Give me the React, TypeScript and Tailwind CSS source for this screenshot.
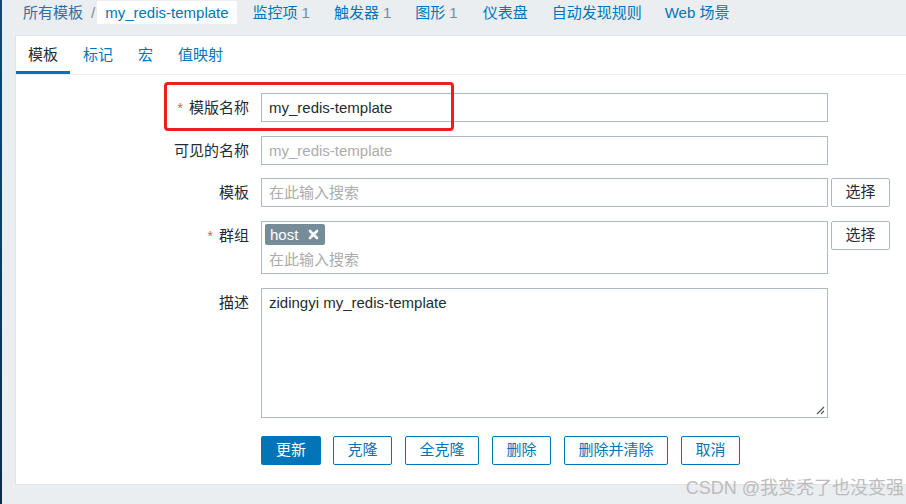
import React from "react";

const font = { fontFamily: '"Liberation Sans", Arial, "Noto Sans CJK SC", sans-serif' };

function Label({ text, required }: { text: string; required?: boolean }) {
  return (
    <div className="w-[233px] shrink-0 h-[29px] leading-[29px] text-right text-[15px] text-[#1f2c33]">
      {required && <span className="text-[#e45959] mr-[6px] text-[14px]">*</span>}
      {text}
    </div>
  );
}

export default function App() {
  return (
    <div className="w-[906px] h-[504px] bg-[#ebeef0] flex overflow-hidden relative" style={font}>
      <div className="w-[2px] h-full shrink-0 bg-gradient-to-b from-[#0b4b80] via-[#0c3d66] to-[#0e2b44]" />
      <div className="flex-1 flex flex-col min-w-0">
        {/* breadcrumb / nav */}
        <div className="h-[35px] shrink-0 flex items-start pt-[1px] pl-[21px] text-[15px] leading-[23px] whitespace-nowrap">
          <span className="text-[#2d6fab]">所有模板</span>
          <span className="text-[#768d99] ml-[8px] mr-[2px]">/</span>
          <span className="bg-white rounded-[2px] px-[8px] h-[23px] text-[#0275b8]">my_redis-template</span>
          <span className="ml-[16px] text-[#0275b8]">监控项<span className="text-[#768d99] ml-[4px]">1</span></span>
          <span className="ml-[24px] text-[#0275b8]">触发器<span className="text-[#768d99] ml-[4px]">1</span></span>
          <span className="ml-[24px] text-[#0275b8]">图形<span className="text-[#768d99] ml-[4px]">1</span></span>
          <span className="ml-[25px] text-[#0275b8]">仪表盘</span>
          <span className="ml-[24px] text-[#0275b8]">自动发现规则</span>
          <span className="ml-[23px] text-[#0275b8]">Web 场景</span>
        </div>
        {/* panel */}
        <div className="ml-[13px] h-[450px] bg-white border border-[#dfe4e7] border-r-0 flex flex-col">
          <div className="h-[39px] shrink-0 flex border-b border-[#ebeef0] text-[15px]">
            <div className="pl-[12px] pr-[12px] h-full flex items-center border-b-[3px] border-[#0275b8] text-[#1f2c33] pt-[3px]">模板</div>
            <div className="pl-[13px] pr-[12px] h-full flex items-center text-[#0275b8]">标记</div>
            <div className="pl-[13px] pr-[12px] h-full flex items-center text-[#0275b8]">宏</div>
            <div className="pl-[13px] pr-[12px] h-full flex items-center text-[#0275b8]">值映射</div>
          </div>
          <div className="flex flex-col pt-[18px] text-[15px]">
            <div className="flex">
              <Label text="模版名称" required />
              <div className="ml-[12px] w-[567px] h-[29px] border border-[#acbbc2] px-[7px] leading-[27px] text-[#1f2c33]">my_redis-template</div>
            </div>
            <div className="flex mt-[14px]">
              <Label text="可见的名称" />
              <div className="ml-[12px] w-[567px] h-[29px] border border-[#acbbc2] px-[7px] leading-[27px] text-[#acacac]">my_redis-template</div>
            </div>
            <div className="flex mt-[13px]">
              <Label text="模板" />
              <div className="ml-[12px] w-[567px] h-[29px] border border-[#acbbc2] px-[7px] leading-[27px] text-[#acacac]">在此输入搜索</div>
              <div className="ml-[3px] w-[59px] h-[29px] border border-[#acbbc2] rounded-[2px] flex items-center justify-center text-[#1f2c33]">选择</div>
            </div>
            <div className="flex mt-[14px]">
              <Label text="群组" required />
              <div className="ml-[12px] w-[567px] h-[53px] border border-[#acbbc2] pl-[3px] pt-[2px]">
                <div className="inline-flex items-center h-[21px] bg-[#768d99] rounded-[2px] pl-[5px] pr-[6px] text-white leading-[21px]">
                  <span>host</span>
                  <svg className="ml-[10px]" width="11" height="11" viewBox="0 0 11 11">
                    <path d="M2 2 L9 9 M9 2 L2 9" stroke="white" strokeWidth="2.6" strokeLinecap="round" />
                  </svg>
                </div>
                <div className="pl-[4px] leading-[26px] text-[#acacac]">在此输入搜索</div>
              </div>
              <div className="ml-[3px] w-[59px] h-[29px] border border-[#acbbc2] rounded-[2px] flex items-center justify-center text-[#1f2c33]">选择</div>
            </div>
            <div className="flex mt-[14px]">
              <Label text="描述" />
              <div className="ml-[12px] w-[567px] h-[130px] border border-[#acbbc2] px-[7px] pt-[5px] leading-[18px] text-[#1f2c33] relative">
                zidingyi my_redis-template
                <svg className="absolute right-[2px] bottom-[2px]" width="9" height="9" viewBox="0 0 9 9">
                  <path d="M8 1 L1 8 M8 5 L5 8" stroke="#555" strokeWidth="1.2" />
                </svg>
              </div>
            </div>
            <div className="flex mt-[18px] pl-[245px]">
              <div className="w-[60px] h-[29px] rounded-[2px] bg-[#0275b8] text-white flex items-center justify-center">更新</div>
              <div className="ml-[12px] w-[59px] h-[29px] rounded-[2px] border border-[#0275b8] text-[#0275b8] flex items-center justify-center">克隆</div>
              <div className="ml-[13px] w-[74px] h-[29px] rounded-[2px] border border-[#0275b8] text-[#0275b8] flex items-center justify-center">全克隆</div>
              <div className="ml-[13px] w-[59px] h-[29px] rounded-[2px] border border-[#0275b8] text-[#0275b8] flex items-center justify-center">删除</div>
              <div className="ml-[13px] w-[104px] h-[29px] rounded-[2px] border border-[#0275b8] text-[#0275b8] flex items-center justify-center">删除并清除</div>
              <div className="ml-[13px] w-[59px] h-[29px] rounded-[2px] border border-[#0275b8] text-[#0275b8] flex items-center justify-center">取消</div>
            </div>
          </div>
        </div>
      </div>
      {/* red annotation box */}
      <div className="absolute left-[164px] top-[82px] w-[290px] h-[49px] border-[3px] border-[#f01d1d] rounded-[4px] pointer-events-none" />
      {/* watermark */}
      <div className="absolute right-[2px] top-[476px] text-[18px] leading-[24px] text-[#bcbcbc] whitespace-nowrap">CSDN @我变秃了也没变强</div>
    </div>
  );
}
